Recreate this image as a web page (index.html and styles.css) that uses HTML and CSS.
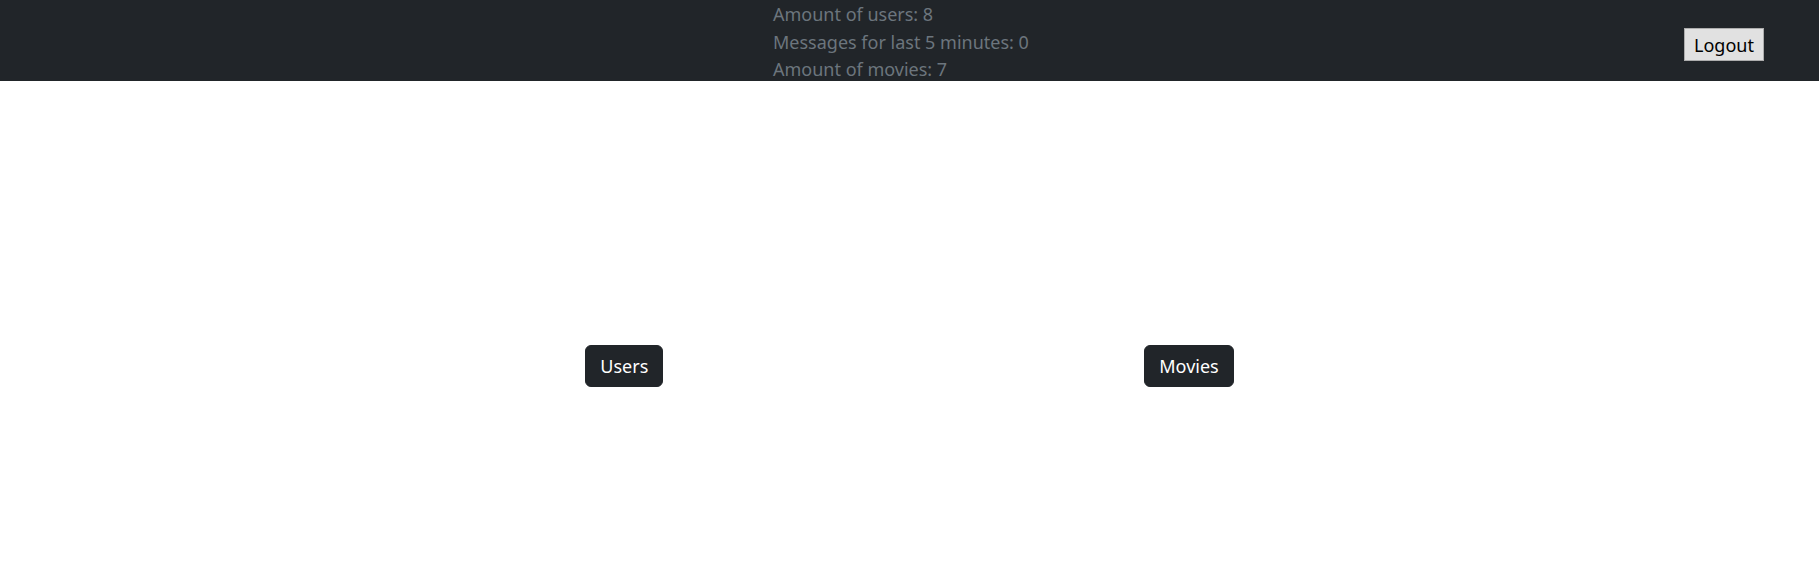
FILE: index.html
```html
<!DOCTYPE html>
<html lang="en">
<head>
<meta charset="utf-8">
<title>Admin</title>
<link rel="stylesheet" href="styles.css">
</head>
<body>
<header class="topbar">
  <div class="stats">
    <div class="stat">Amount of users: 8</div>
    <div class="stat">Messages for last 5 minutes: 0</div>
    <div class="stat">Amount of movies: 7</div>
  </div>
  <button class="logout" type="button">Logout</button>
</header>
<main class="menu">
  <button class="btn-dark" type="button">Users</button>
  <button class="btn-dark" type="button">Movies</button>
</main>
</body>
</html>
```
FILE: styles.css
```css
html { font-size: 18px; }
body {
  margin: 0;
  font-family: "Noto Sans", "Open Sans", sans-serif;
  font-size: 18px;
  line-height: 1.5;
  color: #212529;
  background: #fff;
}
.topbar {
  display: flex;
  align-items: flex-start;
  height: 81px;
  background: #212529;
  padding-left: 773px;
  padding-right: 55px;
  overflow: visible;
}
.stats {
  flex: 1;
  padding-top: 1px;
  color: #6c757d;
  line-height: 27.5px;
}
.logout {
  margin-top: 28px;
  width: 80px;
  height: 33px;
  padding: 0;
  font-family: inherit;
  font-size: 18px;
  color: #000;
  background: #e1e1e1;
  border: 1px solid #adadad;
  border-radius: 0;
}
.menu {
  display: flex;
  justify-content: center;
  gap: 481px;
  padding-top: 264px;
}
.btn-dark {
  height: 42px;
  padding: 0 14px;
  font-family: inherit;
  font-size: 18px;
  line-height: 27px;
  color: #fff;
  background: #212529;
  border: 1px solid #212529;
  border-radius: 6px;
}
```
